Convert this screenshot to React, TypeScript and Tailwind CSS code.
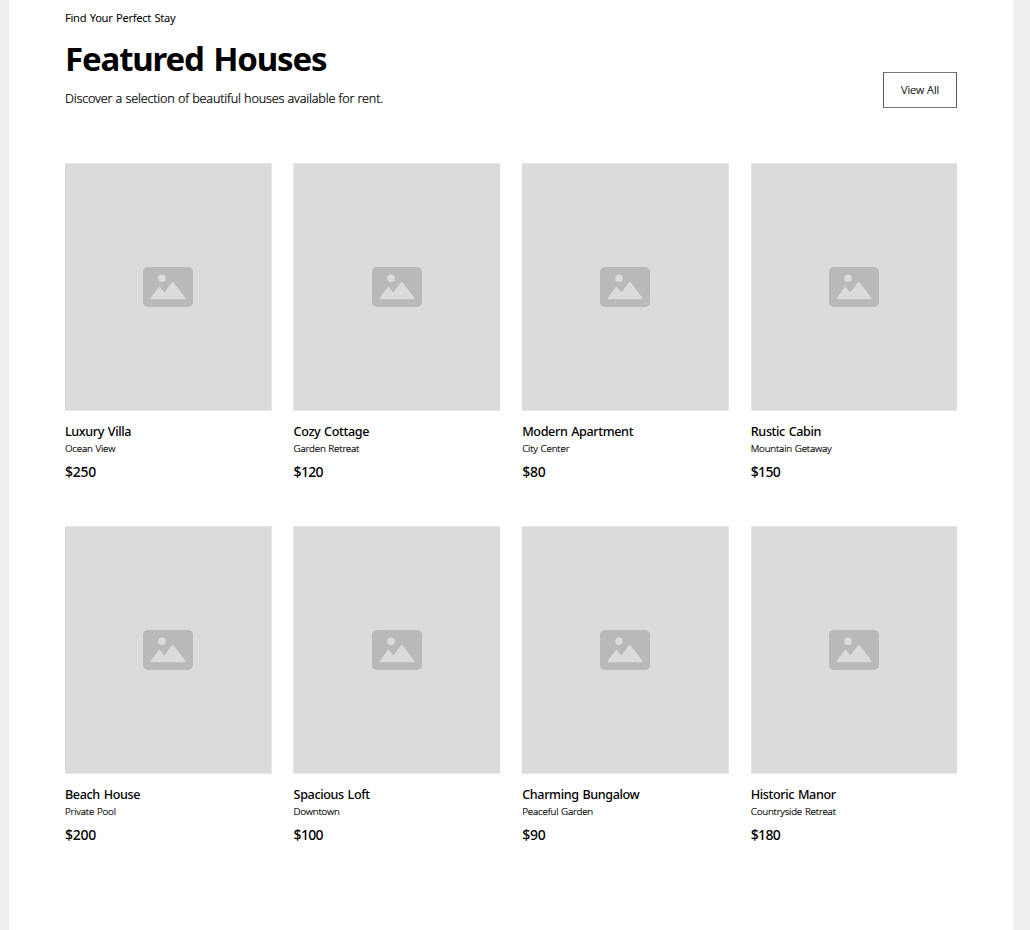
type House = { name: string; place: string; price: string };

const houses: House[] = [
  { name: "Luxury Villa", place: "Ocean View", price: "$250" },
  { name: "Cozy Cottage", place: "Garden Retreat", price: "$120" },
  { name: "Modern Apartment", place: "City Center", price: "$80" },
  { name: "Rustic Cabin", place: "Mountain Getaway", price: "$150" },
  { name: "Beach House", place: "Private Pool", price: "$200" },
  { name: "Spacious Loft", place: "Downtown", price: "$100" },
  { name: "Charming Bungalow", place: "Peaceful Garden", price: "$90" },
  { name: "Historic Manor", place: "Countryside Retreat", price: "$180" },
];

const columnEdges = [
  "w-[207px] border-r",
  "-ml-[0.6px] w-[207px] border-l",
  "-ml-[0.2px] w-[207px] border-r",
  "w-[206px] border-l",
];

function Placeholder({ column }: { column: number }) {
  return (
    <div
      className={`flex h-[248px] items-center justify-center border-y border-[#e6e6e6] bg-[#dbdbdb] ${columnEdges[column]}`}
    >
      <svg width="50" height="40" viewBox="0 0 50 40">
        <rect width="50" height="40" rx="5" fill="#b9b9b9" />
        <circle cx="19" cy="11.2" r="3.8" fill="#dbdbdb" />
        <path
          d="M8.4 32.2c-.9 0-1-.8-.5-1.5l7.5-10.3c.5-.7 1.1-.7 1.6-.1l4.4 5.1 7.400-9.800c.6-.8 1.4-.8 2 0l11.300 15c.6.8.4 1.600-.7 1.600z"
          fill="#dbdbdb"
        />
      </svg>
    </div>
  );
}

function HouseCard({ house, column }: { house: House; column: number }) {
  return (
    <article className="h-[363px]">
      <Placeholder column={column} />
      <h3 className="mt-[11px] text-[12.600px] leading-[19px] font-medium tracking-[-0.38px] [word-spacing:0.9px]">{house.name}</h3>
      <p className="text-[9.800px] leading-[15px] font-light tracking-[-0.2px] [-webkit-text-stroke:0.2px_black] [word-spacing:0.5px]">{house.place}</p>
      <p className={`mt-[6px] text-[14px] leading-[20px] font-medium ${house.price.startsWith("$1") ? "tracking-[-0.7px]" : "tracking-[-0.25px]"}`}>
        {house.price}
      </p>
    </article>
  );
}

export default function App() {
  return (
    <div className="h-[930px] overflow-hidden bg-[#f0efed] pr-[17px] pl-[9px] font-['Noto_Sans',sans-serif] text-black">
      <main className="h-full bg-white pr-[56px] pl-[56px]">
        <header className="flex h-[163px] items-start justify-between">
          <div className="pt-[9px]">
            <p className="text-[11.200px] leading-[18px] tracking-[-0.32px] [word-spacing:0.9px]">Find Your Perfect Stay</p>
            <h2 className="mt-[11px] text-[33px] leading-[42px] font-bold tracking-[-1.15px] [word-spacing:2px]">Featured Houses</h2>
            <p className="mt-[9px] text-[12.600px] leading-[19px] font-light tracking-[-0.2px] [-webkit-text-stroke:0.2px_black] [word-spacing:0.3px]">
              Discover a selection of beautiful houses available for rent.
            </p>
          </div>
          <button className="mt-[72px] h-[36px] w-[74px] border border-[#555] border-y-[#777] text-[11.200px] font-light [-webkit-text-stroke:0.2px_black]">
            View All
          </button>
        </header>
        <section className="grid grid-cols-[228.6px_228.6px_228.6px_206px]">
          {houses.map((house, i) => (
            <HouseCard key={house.name} house={house} column={i % 4} />
          ))}
        </section>
      </main>
    </div>
  );
}
